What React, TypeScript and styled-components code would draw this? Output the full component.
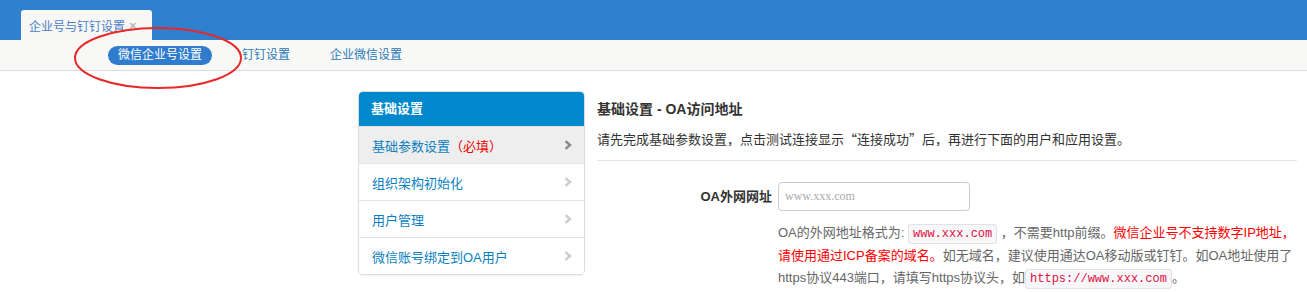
import React from "react";
import styled, { createGlobalStyle } from "styled-components";

const GlobalStyle = createGlobalStyle`
  html, body { margin: 0; padding: 0; background: #fff; }
  body {
    font-family: "Liberation Sans", "Noto Sans CJK SC", sans-serif;
    font-size: 13px;
    color: #333;
  }
`;

const CJK = `"Liberation Sans", "Noto Sans CJK SC", sans-serif`;
const MONO = `"Liberation Mono", "Noto Sans CJK SC", monospace`;

const Page = styled.div`
  width: 1307px;
  height: 292px;
  overflow: hidden;
  position: relative;
`;

const TopBar = styled.div`
  height: 40px;
  background: #3080d0;
  display: flex;
  align-items: flex-end;
  padding-left: 21px;
  box-sizing: border-box;
`;

const Tab = styled.div`
  height: 30px;
  width: 131px;
  box-sizing: border-box;
  background: #f7f7f5;
  border-radius: 3px 3px 0 0;
  display: flex;
  align-items: center;
  padding-left: 8px;
  font-size: 12px;
  color: #4a7cc6;
  font-family: ${CJK};
`;

const Close = styled.span`
  margin-left: 4px;
  color: #bbb;
  font-size: 13px;
  font-weight: bold;
`;

const SubNav = styled.div`
  position: relative;
  height: 30px;
  background: #f8f8f6;
  border-bottom: 1px solid #ddd;
  display: flex;
  align-items: center;
  gap: 20px;
  padding-left: 108px;
`;

const NavLink = styled.span<{ $active?: boolean }>`
  height: 19px;
  line-height: 19px;
  padding: 0 10px;
  border-radius: 10px;
  font-size: 12px;
  font-family: ${CJK};
  background: ${(p) => (p.$active ? "#2f7ccc" : "transparent")};
  color: ${(p) => (p.$active ? "#fff" : "#2a78b8")};
`;

const Ellipse = styled.svg`
  position: absolute;
  left: 72px;
  top: -14px;
  width: 172px;
  height: 64px;
  pointer-events: none;
`;

const Main = styled.div`
  display: flex;
  align-items: flex-start;
  gap: 12px;
  padding: 20px 0 0 358px;
`;

const Sidebar = styled.div`
  width: 227px;
  box-sizing: border-box;
  border: 1px solid #ddd;
  border-radius: 5px;
  overflow: hidden;
  box-shadow: 0 1px 2px rgba(0, 0, 0, 0.06);
  background: #fff;
`;

const SideHeader = styled.div`
  height: 35px;
  line-height: 35px;
  background: #0088cc;
  color: #fff;
  font-weight: bold;
  font-size: 13px;
  padding-left: 13px;
  margin: -1px -1px 0 -1px;
  font-family: ${CJK};
`;

const SideItem = styled.div<{ $active?: boolean }>`
  height: 36px;
  border-top: 1px solid #e3e3e3;
  display: flex;
  align-items: center;
  justify-content: space-between;
  padding: 0 12px 0 13px;
  background: ${(p) => (p.$active ? "#eeeeee" : "#fff")};
  color: #0a7fc0;
  font-size: 13px;
  font-family: ${CJK};
  &:first-of-type { border-top: none; }
`;

const Required = styled.span`
  color: #e00;
`;

const Chevron = ({ color }: { color: string }) => (
  <svg width="8" height="10" viewBox="0 0 8 10">
    <path d="M1.5 1.2 L6 5 L1.5 8.8" fill="none" stroke={color} strokeWidth="2.4" />
  </svg>
);

const Content = styled.div`
  width: 700px;
  padding-top: 8px;
`;

const Title = styled.h3`
  margin: 0;
  font-size: 14px;
  line-height: 20px;
  font-weight: bold;
  color: #333;
  font-family: ${CJK};
`;

const Desc = styled.p`
  margin: 11px 0 0;
  font-size: 13px;
  line-height: 18px;
  color: #333;
  font-family: "Noto Sans CJK SC", sans-serif;
`;

const Divider = styled.div`
  margin-top: 12px;
  border-top: 1px solid #e5e5e5;
`;

const FormRow = styled.div`
  display: flex;
  margin-top: 21px;
`;

const Label = styled.label`
  width: 181px;
  box-sizing: border-box;
  padding-right: 6px;
  text-align: right;
  line-height: 29px;
  font-weight: bold;
  font-size: 13px;
  color: #333;
  font-family: ${CJK};
`;

const Input = styled.input`
  width: 192px;
  height: 29px;
  box-sizing: border-box;
  border: 1px solid #ccc;
  border-radius: 4px;
  padding: 0 6px;
  font-family: "Liberation Serif", serif;
  font-size: 12px;
  outline: none;
  &::placeholder { color: #aaa; }
`;

const Help = styled.div`
  margin: 11px 0 0 181px;
  font-size: 13px;
  line-height: 22px;
  color: #666;
  white-space: nowrap;
  font-family: ${CJK};
`;

const Warn = styled.span`
  color: #f00;
`;

const Code = styled.code`
  padding: 2px 4px;
  font-family: ${MONO};
  font-size: 12px;
  color: #dd1144;
  background: #f7f7f9;
  border: 1px solid #e1e1e8;
  border-radius: 3px;
`;

export default function App() {
  return (
    <Page>
      <GlobalStyle />
      <TopBar>
        <Tab>
          企业号与钉钉设置<Close>×</Close>
        </Tab>
      </TopBar>
      <SubNav>
        <NavLink $active>微信企业号设置</NavLink>
        <NavLink>钉钉设置</NavLink>
        <NavLink>企业微信设置</NavLink>
        <Ellipse viewBox="0 0 172 64">
          <ellipse cx="86" cy="32" rx="83" ry="30" fill="none" stroke="#e82828" strokeWidth="2" />
        </Ellipse>
      </SubNav>
      <Main>
        <Sidebar>
          <SideHeader>基础设置</SideHeader>
          <SideItem $active>
            <span>
              基础参数设置<Required>（必填）</Required>
            </span>
            <Chevron color="#888" />
          </SideItem>
          <SideItem>
            <span>组织架构初始化</span>
            <Chevron color="#ccc" />
          </SideItem>
          <SideItem>
            <span>用户管理</span>
            <Chevron color="#ccc" />
          </SideItem>
          <SideItem>
            <span>微信账号绑定到OA用户</span>
            <Chevron color="#ccc" />
          </SideItem>
        </Sidebar>
        <Content>
          <Title>基础设置 - OA访问地址</Title>
          <Desc>请先完成基础参数设置，点击测试连接显示“连接成功”后，再进行下面的用户和应用设置。</Desc>
          <Divider />
          <FormRow>
            <Label>OA外网网址</Label>
            <Input placeholder="www.xxx.com" />
          </FormRow>
          <Help>
            OA的外网地址格式为: <Code>www.xxx.com</Code> ，不需要http前缀。
            <Warn>微信企业号不支持数字IP地址，</Warn>
            <br />
            <Warn>请使用通过ICP备案的域名。</Warn>如无域名，建议使用通达OA移动版或钉钉。如OA地址使用了
            <br />
            https协议443端口，请填写https协议头，如<Code>https://www.xxx.com</Code>。
          </Help>
        </Content>
      </Main>
    </Page>
  );
}
